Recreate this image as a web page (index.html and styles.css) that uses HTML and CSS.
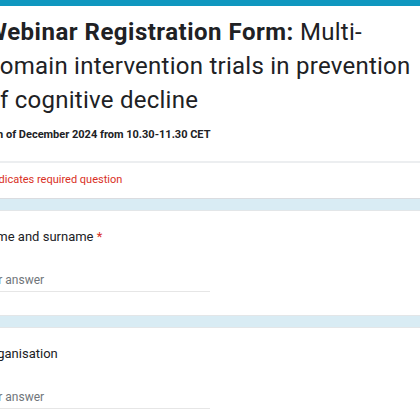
FILE: index.html
```html
<!DOCTYPE html>
<html>
<head>
<meta charset="utf-8">
<link rel="stylesheet" href="styles.css">
</head>
<body>
<div class="topbar"></div>
<div class="page">
  <section class="card header-card">
    <h1 class="title"><span class="title-bold">Webinar Registration Form:</span> Multi-<br>domain intervention trials in prevention<br>of cognitive decline</h1>
    <p class="subtitle">5th of December 2024 from 10.30-11.30 CET</p>
    <div class="divider"></div>
    <p class="required-note">* Indicates required question</p>
  </section>
  <section class="card question">
    <div class="q-label name-label">Name and surname <span class="star">*</span></div>
    <div class="answer">Your answer</div>
  </section>
  <section class="card question">
    <div class="q-label org-label">Organisation</div>
    <div class="answer">Your answer</div>
  </section>
</div>
</body>
</html>
```

FILE: styles.css
```css
html, body {
  margin: 0;
  padding: 0;
  background: #d9ecf4;
  overflow: hidden;
}
body {
  font-family: Roboto, "Liberation Sans", sans-serif;
  color: #202124;
}
.topbar {
  height: 6px;
  background: #0f97bf;
}
.page {
  margin-left: -14px;
  width: 460px;
  display: flex;
  flex-direction: column;
  gap: 11px;
}
.card {
  background: #fff;
}
.header-card {
  padding: 9px 0 10px 0;
  border-bottom: 1px solid #dadce0;
}
.title {
  margin: 0;
  font-family: Roboto, sans-serif;
  font-weight: 400;
  font-size: 24px;
  line-height: 34px;
  letter-spacing: 0.25px;
  color: #202124;
}
.title-bold {
  font-weight: 700;
  letter-spacing: 0.5px;
}
.subtitle {
  margin: 10px 0 0 1px;
  font-size: 11px;
  font-weight: 700;
  line-height: 16px;
}
.divider {
  height: 2px;
  background: #eceef0;
  margin: 18px 0 0 -14px;
  width: 480px;
}
.required-note {
  margin: 9px 0 0 -4px;
  font-size: 11px;
  color: #d93025;
  line-height: 16px;
}
.question {
  padding: 16px 0 23px 0;
  border-top: 1px solid #e3e6e8;
  border-bottom: 1px solid #e3e6e8;
}
.q-label {
  font-size: 13px;
  line-height: 20px;
  color: #202124;
}
.name-label { margin-left: -6px; }
.org-label { margin-left: -2px; }
.star { color: #d93025; }
.answer {
  margin-top: 25px;
  margin-left: -8px;
  width: 232px;
  font-size: 12px;
  line-height: 16px;
  color: #70757a;
  padding-bottom: 3px;
  border-bottom: 1px solid #e6e6e6;
}
```
